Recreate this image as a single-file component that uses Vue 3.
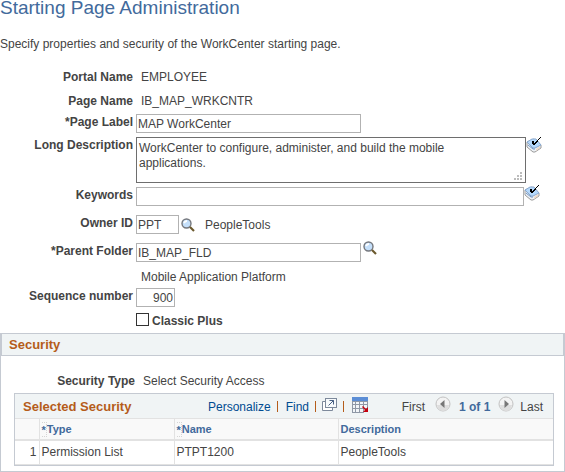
<script setup>
import { ref } from 'vue'

const pageLabel = ref('MAP WorkCenter')
const longDescription = ref('WorkCenter to configure, administer, and build the mobile\napplications.')
const keywords = ref('')
const ownerId = ref('PPT')
const parentFolder = ref('IB_MAP_FLD')
const sequence = ref('900')
const classicPlus = ref(false)
const permissions = [{ type: 'Permission List', name: 'PTPT1200', description: 'PeopleTools' }]
</script>

<template>
  <main class="page">
    <h1>Starting Page Administration</h1>
    <p class="intro">Specify properties and security of the WorkCenter starting page.</p>

    <form class="form" @submit.prevent>
      <div class="row text-row">
        <span class="label">Portal Name</span>
        <span class="value">EMPLOYEE</span>
      </div>
      <div class="row text-row">
        <span class="label">Page Name</span>
        <span class="value">IB_MAP_WRKCNTR</span>
      </div>
      <div class="row">
        <label class="label" for="page-label">*Page Label</label>
        <input id="page-label" v-model="pageLabel" class="box medium" type="text" />
      </div>
      <div class="row near">
        <label class="label" for="long-description">Long Description</label>
        <div class="area">
          <textarea id="long-description" v-model="longDescription"></textarea>
          <svg class="grip" width="8" height="8" viewBox="0 0 8 8" aria-hidden="true">
            <path fill="#bcbcbc" d="M6 0h2v2H6zM3 3h2v2H3zM6 3h2v2H6zM0 6h2v2H0zM3 6h2v2H3zM6 6h2v2H6z" />
          </svg>
        </div>
        <button class="icon book" type="button" aria-label="Spell check long description">
          <svg width="16" height="16" viewBox="0 0 16 16">
            <path d="M1 5v5l6 5h2l6-4V8L8 2z" fill="#eef2f6" stroke="#9a9a9a" />
            <path d="M1 5 6 2h4l5 6-6 3H7z" fill="#b4d8fb" stroke="#8aa9cf" />
            <path d="M2 8l5 4h2" fill="none" stroke="#6f94c2" />
            <path d="M10 12v2l4-3V9z" fill="#f0dac8" />
            <path d="M6 4h2v2h1V5h1V4h1V3h1V2h1V1h1V0h1v1h-1v1h-1v1h-1v2h-1v1h-1v1H9v1H7V7H6z" fill="#000" />
          </svg>
        </button>
      </div>
      <div class="row near">
        <label class="label" for="keywords">Keywords</label>
        <input id="keywords" v-model="keywords" class="box wide" type="text" />
        <button class="icon raised" type="button" aria-label="Spell check keywords">
          <svg width="16" height="16" viewBox="0 0 16 16">
            <path d="M1 5v5l6 5h2l6-4V8L8 2z" fill="#eef2f6" stroke="#9a9a9a" />
            <path d="M1 5 6 2h4l5 6-6 3H7z" fill="#b4d8fb" stroke="#8aa9cf" />
            <path d="M2 8l5 4h2" fill="none" stroke="#6f94c2" />
            <path d="M10 12v2l4-3V9z" fill="#f0dac8" />
            <path d="M6 4h2v2h1V5h1V4h1V3h1V2h1V1h1V0h1v1h-1v1h-1v1h-1v2h-1v1h-1v1H9v1H7V7H6z" fill="#000" />
          </svg>
        </button>
      </div>
      <div class="row spaced">
        <label class="label" for="owner-id">Owner ID</label>
        <input id="owner-id" v-model="ownerId" class="box short" type="text" />
        <button class="icon lookup lowered" type="button" aria-label="Look up owner ID">
          <svg width="14" height="14" viewBox="0 0 14 14">
            <circle cx="5.5" cy="5.5" r="4.5" fill="#c5e0fb" stroke="#74777d" stroke-width="1.4" />
            <path d="M3 5q1-2 3-2" fill="none" stroke="#fff" stroke-width="2" />
            <path d="m9 9 4 4" stroke="#6b592d" stroke-width="2.2" />
          </svg>
        </button>
        <span class="owner-name">PeopleTools</span>
      </div>
      <div class="row spaced">
        <label class="label" for="parent-folder">*Parent Folder</label>
        <input id="parent-folder" v-model="parentFolder" class="box medium" type="text" />
        <button class="icon lookup raised" type="button" aria-label="Look up parent folder">
          <svg width="14" height="14" viewBox="0 0 14 14">
            <circle cx="5.5" cy="5.5" r="4.5" fill="#c5e0fb" stroke="#74777d" stroke-width="1.4" />
            <path d="M3 5q1-2 3-2" fill="none" stroke="#fff" stroke-width="2" />
            <path d="m9 9 4 4" stroke="#6b592d" stroke-width="2.2" />
          </svg>
        </button>
      </div>
      <div class="row text-row folder-row">
        <span class="label"></span>
        <span class="value">Mobile Application Platform</span>
      </div>
      <div class="row">
        <label class="label" for="sequence">Sequence number</label>
        <input id="sequence" v-model="sequence" class="box number" type="text" inputmode="numeric" />
      </div>
      <div class="row check-row">
        <span class="label"></span>
        <input id="classic-plus" v-model="classicPlus" class="check" type="checkbox" />
        <label class="check-label" for="classic-plus">Classic Plus</label>
      </div>
    </form>

    <section class="security">
      <h2>Security</h2>
      <div class="security-type">
        <span class="label">Security Type</span>
        <span>Select Security Access</span>
      </div>
      <div class="grid">
        <div class="grid-bar">
          <h3>Selected Security</h3>
          <div class="tools">
            <a href="#">Personalize</a>
            <i class="sep"></i>
            <a href="#">Find</a>
            <i class="sep"></i>
            <button type="button" class="icon window" aria-label="View in new window">
              <svg width="15" height="13" viewBox="0 0 15 13">
                <path d="M3 3.5H.5v9h10V10" fill="#fff" stroke="#7d899b" />
                <rect x="3.5" y=".5" width="11" height="9" fill="#f7fafc" stroke="#7d899b" />
                <path d="m6.500 7.500 5-5M7.500 2.500h4v4" fill="none" stroke="#475f83" />
              </svg>
            </button>
            <i class="sep"></i>
            <button type="button" class="icon" aria-label="Download to spreadsheet">
              <svg width="16" height="16" viewBox="0 0 16 16">
                <path d="M0 0h16v16H0z" fill="#8f98a6" />
                <path d="M0 0h16v4H0z" fill="#5c8ed6" />
                <path d="M1 5h2v2H1zM4 5h3v2H4zM8 5h3v2H8zM12 5h3v2h-3zM1 8h2v3H1zM4 8h3v3H4zM8 8h3v3H8zM12 8h3v3h-3zM1 12h2v3H1zM4 12h3v3H4zM8 12h3v3H8z" fill="#f2f5f8" />
                <path d="M12 12h4v4h-4z" fill="#f0f4f5" />
                <path d="m11 9 3 3 2-2v5h-5l2-2-3-3z" fill="#c4000d" />
              </svg>
            </button>
          </div>
          <nav class="pager" aria-label="Rows">
            <span class="first">First</span>
            <button type="button" class="icon" aria-label="Previous">
              <svg width="16" height="16" viewBox="0 0 16 16">
                <circle cx="8" cy="8" r="7" fill="#f3f3f3" stroke="#c2c2c2" />
                <path d="M2 9a6 6 0 0 0 12 0z" fill="#dedede" />
                <path d="M9.500 4v8L5 8z" fill="#777" />
              </svg>
            </button>
            <strong>1 of 1</strong>
            <button type="button" class="icon" aria-label="Next">
              <svg width="16" height="16" viewBox="0 0 16 16">
                <circle cx="8" cy="8" r="7" fill="#f3f3f3" stroke="#c2c2c2" />
                <path d="M2 9a6 6 0 0 0 12 0z" fill="#dedede" />
                <path d="M6.500 4v8L11 8z" fill="#777" />
              </svg>
            </button>
            <span class="last">Last</span>
          </nav>
        </div>
        <table>
          <colgroup>
            <col class="c-num" />
            <col class="c-type" />
            <col class="c-name" />
            <col />
          </colgroup>
          <thead>
            <tr>
              <th></th>
              <th scope="col"><abbr>*</abbr>Type</th>
              <th scope="col"><abbr>*</abbr>Name</th>
              <th scope="col">Description</th>
            </tr>
          </thead>
          <tbody>
            <tr v-for="(p, i) in permissions" :key="p.name">
              <td class="num">{{ i + 1 }}</td>
              <td>{{ p.type }}</td>
              <td>{{ p.name }}</td>
              <td>{{ p.description }}</td>
            </tr>
          </tbody>
        </table>
      </div>
    </section>
  </main>
</template>

<style>
body {
  background: #fff;
}
</style>

<style scoped>
* {
  box-sizing: border-box;
}
.page {
  font: 12px/16px 'Liberation Sans', Arial, sans-serif;
  color: #444;
}
h1 {
  margin: 0;
  font-size: 19px;
  line-height: 16px;
  font-weight: 400;
  color: #426a9c;
}
.intro {
  margin: 20px 0 17px;
}
.row {
  display: flex;
  align-items: flex-start;
}
.text-row {
  padding-bottom: 8px;
}
.form .text-row:nth-child(2) {
  padding-bottom: 5px;
}
.near {
  margin-top: 4px;
}
.spaced {
  margin-top: 9px;
}
.label {
  flex: none;
  width: 133px;
  margin-right: 3px;
  text-align: right;
  font-weight: 700;
}
.value {
  padding-left: 5px;
}
.box {
  height: 19px;
  margin: 0;
  padding: 0 1px;
  border: 1px solid #b2b2b2;
  border-radius: 0;
  background: #fff;
  font: inherit;
  color: #444;
}
.medium {
  width: 225px;
}
.wide {
  flex: 0 1 388px;
  min-width: 0;
}
.short {
  width: 43px;
}
.number {
  width: 39px;
  text-align: right;
}
.area {
  position: relative;
  flex: 0 1 390px;
  height: 46px;
}
textarea {
  display: block;
  width: 100%;
  height: 100%;
  margin: 0;
  padding: 3px 2px;
  border: 1px solid #6e6e6e;
  border-radius: 0;
  resize: none;
  overflow: hidden;
  font: 12px/15px 'Liberation Sans', Arial, sans-serif;
  color: #444;
}
.grip {
  position: absolute;
  right: 4px;
  bottom: 3px;
}
.icon {
  flex: none;
  display: block;
  padding: 0;
  border: 0;
  background: none;
}
.icon svg {
  display: block;
}
.raised {
  margin-top: -2px;
}
.lookup {
  margin-left: 2px;
}
.lowered {
  margin-top: 3px;
}
.owner-name {
  margin: 2px 0 0 10px;
}
.folder-row {
  padding: 7px 0 3px;
}
.check-row {
  padding: 6px 0;
}
.check {
  appearance: none;
  width: 13px;
  height: 13px;
  margin: 0 3px 0 0;
  border: 1px solid #333;
  background: #fff;
}
.check:checked {
  background: #426a9c;
}
.check-row .label {
  height: 14px;
}
.check-label {
  font-weight: 700;
  line-height: 14px;
  padding-top: 1px;
  margin-bottom: -1px;
}
.security {
  border: 1px solid #c5cad2;
  padding-bottom: 5px;
}
h2 {
  margin: 0;
  padding: 0 7px;
  font-size: 13px;
  line-height: 21px;
  color: #b55c1a;
  background: #f0f4f5;
  border: 1px solid #c5cad2;
  border-top: 0;
}
.security-type {
  display: flex;
  gap: 5px;
  padding: 17px 0 4px 1px;
}
.grid {
  margin: 0 10px 0 13px;
  border: 1px solid #c5cad2;
}
.grid-bar {
  display: flex;
  align-items: center;
  height: 24px;
  padding: 1px 9px 0 8px;
  background: #f0f4f5;
}
h3 {
  margin: 0;
  flex: 0 0 185px;
  font-size: 13px;
  line-height: 16px;
  color: #b55c1a;
}
.tools {
  display: flex;
  align-items: center;
  gap: 6px;
}
a {
  color: #004b91;
  text-decoration: none;
}
.sep {
  width: 1px;
  height: 11px;
  margin-right: 2px;
  background: #b55c1a;
}
.tools .icon {
  margin-bottom: 4px;
}
.tools .window {
  margin-left: -2px;
}
.pager {
  display: flex;
  align-items: center;
  gap: 8px;
  margin-left: auto;
}
.pager .icon {
  margin-bottom: 6px;
}
.pager .last {
  margin-left: -2px;
  margin-right: 1px;
}
.pager .first {
  margin-right: 2px;
}
.pager strong {
  color: #426a9c;
}
table {
  width: 100%;
  border-collapse: collapse;
  table-layout: fixed;
}
.c-num {
  width: 24px;
}
.c-type {
  width: 135px;
}
.c-name {
  width: 164px;
}
th,
td {
  padding: 0 2px;
  text-align: left;
  border-left: 1px solid #e2e2e2;
}
th:first-child,
td:first-child {
  border-left: 0;
}
th {
  height: 21px;
  font-size: 11px;
  line-height: 18px;
  color: #426a9c;
  background: #f9f9f9;
  border-top: 1px solid #e2e2e2;
  border-bottom: 2px solid #e2e2e2;
}
abbr {
  display: inline-block;
  height: 15px;
  line-height: 15px;
  vertical-align: middle;
  border: 1px dotted #d5d5d5;
  border-left: 0;
}
td {
  height: 25px;
  border-bottom: 1px solid #e2e2e2;
}
.num {
  text-align: right;
}
</style>
